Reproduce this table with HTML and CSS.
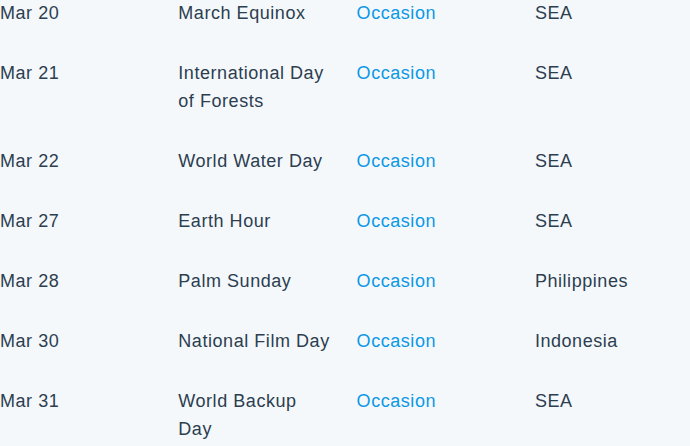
FILE: index.html
```html
<!DOCTYPE html>
<html>
<head>
<meta charset="utf-8">
<link rel="stylesheet" href="styles.css">
</head>
<body>
<table class="events">
  <tbody>
    <tr><td class="date">Mar 20</td><td class="name">March Equinox</td><td class="type"><a href="#">Occasion</a></td><td class="region">SEA</td></tr>
    <tr><td class="date">Mar 21</td><td class="name">International Day of Forests</td><td class="type"><a href="#">Occasion</a></td><td class="region">SEA</td></tr>
    <tr><td class="date">Mar 22</td><td class="name">World Water Day</td><td class="type"><a href="#">Occasion</a></td><td class="region">SEA</td></tr>
    <tr><td class="date">Mar 27</td><td class="name">Earth Hour</td><td class="type"><a href="#">Occasion</a></td><td class="region">SEA</td></tr>
    <tr><td class="date">Mar 28</td><td class="name">Palm Sunday</td><td class="type"><a href="#">Occasion</a></td><td class="region">Philippines</td></tr>
    <tr><td class="date">Mar 30</td><td class="name">National Film Day</td><td class="type"><a href="#">Occasion</a></td><td class="region">Indonesia</td></tr>
    <tr><td class="date">Mar 31</td><td class="name">World Backup Day</td><td class="type"><a href="#">Occasion</a></td><td class="region">SEA</td></tr>
  </tbody>
</table>
</body>
</html>
```
FILE: styles.css
```css
html, body {
  margin: 0;
  padding: 0;
  background: #f4f8fb;
}
body {
  font-family: "Liberation Sans", Arial, sans-serif;
  font-size: 18px;
  letter-spacing: 0.55px;
  line-height: 28px;
  color: #2c3e50;
  overflow: hidden;
}
.events {
  border-collapse: collapse;
  table-layout: fixed;
  width: 713px;
  margin-top: -17px;
}
.events td {
  width: 178.3px;
  padding: 16px 22px 16px 0;
  vertical-align: top;
  box-sizing: border-box;
}
.events a {
  color: #0b98e6;
  text-decoration: none;
}
```
